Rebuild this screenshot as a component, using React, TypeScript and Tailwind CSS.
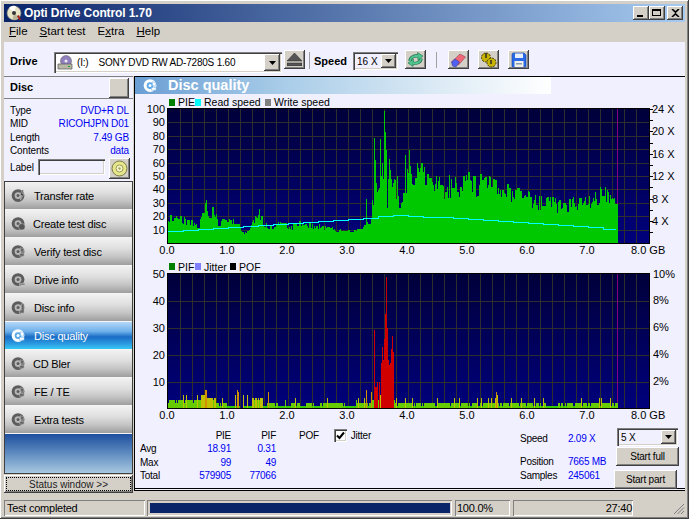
import React from 'react';

const raised = 'shadow-[inset_-1px_-1px_0_#404040,inset_1px_1px_0_#fff,inset_-2px_-2px_0_#808080]';
const sunken = 'shadow-[inset_1px_1px_0_#808080,inset_2px_2px_0_#404040,inset_-1px_-1px_0_#fff,inset_-2px_-2px_0_#d4d0c8]';
const thin = 'shadow-[inset_1px_1px_0_#808080,inset_-1px_-1px_0_#fff]';

function makeRandom(seed: number) {
  let s = seed;
  return () => {
    s = (s * 1664525 + 1013904223) % 4294967296;
    return s / 4294967296;
  };
}

function interp(points: number[][], x: number) {
  for (let i = 1; i < points.length; i++) {
    if (x <= points[i][0]) {
      const [x0, y0] = points[i - 1];
      const [x1, y1] = points[i];
      return y0 + ((y1 - y0) * (x - x0)) / (x1 - x0);
    }
  }
  return points[points.length - 1][1];
}

const pieEnvelope = [
  [0, 19], [0.1, 21], [0.3, 17], [0.5, 14], [0.55, 22], [0.6, 37], [0.64, 30], [0.68, 20], [0.75, 25], [0.85, 14],
  [0.95, 18], [1.1, 17], [1.15, 14], [1.25, 8], [1.35, 10], [1.4, 15], [1.5, 25], [1.58, 15], [1.7, 13], [1.85, 16],
  [2.0, 11], [2.2, 15], [2.5, 13], [2.8, 10], [3.2, 10], [3.3, 15], [3.38, 17], [3.42, 42], [3.6, 48], [3.8, 42],
  [3.9, 55], [4.0, 60], [4.2, 54], [4.5, 44], [5.0, 47], [5.5, 44], [6.0, 35], [6.5, 30], [7.0, 32], [7.3, 42], [7.45, 33], [7.51, 28],
];

const pieSpikes: Record<number, number> = {
  365: 33, 373: 79, 374: 62, 379: 78, 380: 50, 383: 99, 384: 83, 385: 70, 381: 60, 388: 63, 389: 55, 391: 42, 408: 70, 409: 58, 416: 60, 417: 56,
};

function pieBars() {
  const rand = makeRandom(11);
  let d = '';
  let last = 0;
  for (let x = 167; x < 617; x++) {
    const gb = (x - 167) / 60;
    const env = interp(pieEnvelope, gb);
    const wide = gb > 3.4 && gb < 4;
    const right = gb >= 4;
    let v = rand() < 0.25 && last ? last : env * (wide ? 0.55 + 0.6 * rand() : right ? 0.72 + 0.42 * rand() : 0.8 + 0.34 * rand());
    last = v;
    if (pieSpikes[x]) v = pieSpikes[x];
    d += `M${x + 0.5} 243V${Math.round(243.4 - v * 1.34)}`;
  }
  return d;
}

function readLine() {
  const pts = [[167, 231], [370, 217], [390, 215], [408, 216], [467, 219], [527, 223], [587, 227], [614, 231]];
  let d = 'M167 231.5';
  for (let x = 167; x < 615; x += 15) {
    const y = Math.round(interp(pts, x)) + 0.5;
    d += `V${y}H${Math.min(x + 15, 615)}`;
  }
  return d;
}

const pifBase = [
  [0, 0.45, 3], [0.45, 0.55, 3], [0.55, 0.65, 5], [0.65, 0.8, 4], [0.8, 1.0, 2], [1.0, 1.2, 1], [1.2, 1.25, 0], [1.25, 1.4, 1],
  [1.4, 1.58, 4], [1.58, 1.65, 1], [1.65, 1.82, 2], [1.82, 2.05, 1], [2.05, 2.2, 2], [2.2, 2.3, 1], [2.3, 2.43, 2], [2.43, 2.53, 1],
  [2.53, 2.78, 2], [2.78, 2.95, 2], [2.95, 3.15, 1], [3.15, 3.4, 2], [3.4, 3.8, 3], [3.8, 4.4, 2], [4.4, 4.6, 2], [4.6, 5, 2], [5, 5.5, 2],
  [5.5, 6.3, 2], [6.3, 6.5, 1], [6.5, 7.5, 2],
];

const pifSpikes: Record<number, number> = {
  365: 7, 370: 6, 373: 29, 374: 8, 375: 8, 376: 10, 378: 10, 379: 5, 380: 17, 381: 23, 382: 18, 383: 26, 384: 35, 385: 49, 386: 30, 387: 18,
  388: 16, 389: 17, 390: 22, 391: 27, 392: 21, 236: 7, 237: 6, 234: 5, 246: 5, 242: 5, 267: 6, 495: 6, 496: 5, 494: 4,
};

function pifColor(v: number) {
  if (v >= 8) return '#d00000';
  if (v >= 6) return '#d09000';
  if (v >= 4) return '#c0c000';
  if (v >= 2) return '#66cc00';
  return '#33cc00';
}

function pifBars() {
  const rand = makeRandom(29);
  const out: { x: number; y: number; c: string }[] = [];
  for (let x = 167; x < 617; x++) {
    const gb = (x - 167) / 60;
    const seg = pifBase.find((s) => gb >= s[0] && gb < s[1]);
    let v = seg ? seg[2] : 1;
    const r = rand();
    if (r < 0.05) v += 2;
    else if (r < 0.25 && v > 1) v -= 1;
    if (pifSpikes[x]) v = pifSpikes[x];
    out.push({ x, y: Math.round(408.5 - v * 2.69), c: pifColor(v) });
  }
  return out;
}

function Grid({ top, bottom, rows }: { top: number; bottom: number; rows: number[] }) {
  const xs = Array.from({ length: 39 }, (_, i) => 179 + i * 12);
  return (
    <g stroke="#2e2e2e" strokeWidth="1" shapeRendering="crispEdges">
      {xs.map((x) => (
        <line key={x} x1={x + 0.5} x2={x + 0.5} y1={top} y2={bottom} />
      ))}
      {rows.map((y) => (
        <line key={y} x1={167} x2={648} y1={y + 0.5} y2={y + 0.5} />
      ))}
    </g>
  );
}

function XLabels({ y }: { y: number }) {
  return (
    <g fill="#000" fontSize="11">
      {[0, 1, 2, 3, 4, 5, 6, 7].map((n) => (
        <text key={n} x={166 + n * 60} y={y} textAnchor="middle">{n}.0</text>
      ))}
      <text x={630} y={y}>8.0 GB</text>
    </g>
  );
}

function TopChart() {
  const rows = [1, 2, 3, 4, 5, 6, 7, 8, 9].map((k) => Math.round(243 - 13.4 * k));
  return (
    <svg width="551" height="165" viewBox="134 95 551 165" className="block shrink-0">
      <defs>
        <linearGradient id="plotTop" x1="0" x2="0" y1="0" y2="1">
          <stop offset="0" stopColor="#00003a" />
          <stop offset="1" stopColor="#00007c" />
        </linearGradient>
      </defs>
      <rect x="168" y="99" width="6" height="7" fill="#008000" />
      <text x="177" y="106" fontSize="10.5">PIE</text>
      <rect x="194" y="99" width="6" height="7" fill="#00ffff" />
      <text x="203" y="106" fontSize="10.5">Read speed</text>
      <rect x="264" y="99" width="6" height="7" fill="#808080" />
      <text x="273" y="106" fontSize="10.5">Write speed</text>
      <rect x="167" y="109" width="481" height="134" fill="url(#plotTop)" />
      <Grid top={109} bottom={243} rows={rows} />
      <path d="M616.5 109V243" stroke="#800080" shapeRendering="crispEdges" />
      <path d={pieBars()} stroke="#00c800" shapeRendering="crispEdges" />
      <path d={readLine()} stroke="#00ffff" fill="none" shapeRendering="crispEdges" />
      <rect x="166.5" y="108.5" width="482" height="135" fill="none" stroke="#000" shapeRendering="crispEdges" />
      <g fill="#000" fontSize="11" textAnchor="end">
        <text x="164" y="113">100</text>
        {[9, 8, 7, 6, 5, 4, 3, 2, 1].map((k) => (
          <text key={k} x="164" y={Math.round(243 - 13.4 * k) + 4}>{k * 10}</text>
        ))}
      </g>
      <g stroke="#000" shapeRendering="crispEdges">
        {Array.from({ length: 12 }, (_, i) => (
          <line key={i} x1="649" x2="652" y1={Math.round(109 + i * 11.2) + 0.5} y2={Math.round(109 + i * 11.2) + 0.5} />
        ))}
      </g>
      <g fill="#000" fontSize="11">
        {[24, 20, 16, 12, 8, 4].map((s, i) => (
          <text key={s} x="651" y={113 + i * 22.4}>{s} X</text>
        ))}
      </g>
      <XLabels y={254} />
    </svg>
  );
}

function BottomChart() {
  const rows = [382, 355, 328, 301];
  return (
    <svg width="551" height="165" viewBox="134 260 551 165" className="block shrink-0">
      <defs>
        <linearGradient id="plotBottom" x1="0" x2="0" y1="0" y2="1">
          <stop offset="0" stopColor="#00003a" />
          <stop offset="1" stopColor="#00007c" />
        </linearGradient>
      </defs>
      <rect x="168" y="263" width="6" height="7" fill="#008000" />
      <text x="177" y="271" fontSize="10.5">PIF</text>
      <rect x="194" y="263" width="6" height="7" fill="#8080ff" />
      <text x="203" y="271" fontSize="10.5">Jitter</text>
      <rect x="229" y="263" width="6" height="7" fill="#000" />
      <text x="238" y="271" fontSize="10.5">POF</text>
      <rect x="167" y="274" width="481" height="134" fill="url(#plotBottom)" />
      <Grid top={274} bottom={408} rows={rows} />
      <path d="M616.5 274V408" stroke="#800080" shapeRendering="crispEdges" />
      <g shapeRendering="crispEdges">
        {pifBars().map((b) => (
          <line key={b.x} x1={b.x + 0.5} x2={b.x + 0.5} y1={408} y2={b.y} stroke={b.c} />
        ))}
      </g>
      <rect x="166.5" y="273.5" width="482" height="135" fill="none" stroke="#000" shapeRendering="crispEdges" />
      <g fill="#000" fontSize="11" textAnchor="end">
        <text x="164" y="278">50</text>
        <text x="164" y="305">40</text>
        <text x="164" y="332">30</text>
        <text x="164" y="359">20</text>
        <text x="164" y="386">10</text>
      </g>
      <g fill="#000" fontSize="11">
        <text x="652" y="278">10%</text>
        <text x="652" y="304">8%</text>
        <text x="652" y="331">6%</text>
        <text x="652" y="358">4%</text>
        <text x="652" y="385">2%</text>
      </g>
      <XLabels y={419} />
    </svg>
  );
}

function DiscIcon({ light = false, size = 15, mark = 0 }: { light?: boolean; size?: number; mark?: number }) {
  const main = light ? '#ffffff' : '#5c5c5c';
  const ring = light ? '#5aa8e8' : '#b8b8b8';
  return (
    <svg width={size} height={size} viewBox="0 0 16 16" className="shrink-0">
      <circle cx="7.5" cy="8" r="6.8" fill={main} />
      <circle cx="7.5" cy="8" r="3.6" fill={ring} />
      <circle cx="7.5" cy="8" r="1.6" fill={main} />
      {mark === 1 && <path d="M12 2 9.5 8h2l-1.500 5 4-7h-2l1.500-4z" fill={light ? '#fff' : '#444'} stroke="#ddd" strokeWidth=".5" />}
      {mark === 2 && <circle cx="11.500" cy="11.500" r="3.500" fill="#555" stroke="#ccc" strokeWidth=".5" />}
      {mark === 3 && <path d="M9 12h6v2H9z" fill="#777" stroke="#ddd" strokeWidth=".5" />}
      {mark === 4 && <path d="M11 4h3v10h-5v-3h2z" fill="#666" stroke="#ddd" strokeWidth=".5" />}
      {mark === 5 && <path d="m10 4 4 1-1 4-3-1zM9 10h5v3H9z" fill={light ? '#fff' : '#666'} stroke={light ? '#5aa8e8' : '#ccc'} strokeWidth=".5" />}
    </svg>
  );
}

function ToolButton({ className, children }: { className: string; children: React.ReactNode }) {
  return <div className={`${raised} ${className} w-[21px] h-[19px] bg-[#d4d0c8] flex items-center justify-center shrink-0`}>{children}</div>;
}

function ComboArrow({ className }: { className: string }) {
  return (
    <div className={`${raised} ${className} bg-[#d4d0c8] flex items-center justify-center`}>
      <svg width="7" height="4" viewBox="0 0 7 4"><path d="M0 0h7L3.500 4z" fill="#000" /></svg>
    </div>
  );
}

const navItems = [
  { label: 'Transfer rate', mark: 1, pl: 'pl-[29px]' },
  { label: 'Create test disc', mark: 2, pl: 'pl-[28px]' },
  { label: 'Verify test disc', mark: 5, pl: 'pl-[29px]' },
  { label: 'Drive info', mark: 3, pl: 'pl-[29px]' },
  { label: 'Disc info', mark: 4, pl: 'pl-[29px]' },
  { label: 'Disc quality', mark: 5, pl: 'pl-[29px]', active: true },
  { label: 'CD Bler', mark: 5, pl: 'pl-[28px]' },
  { label: 'FE / TE', mark: 5, pl: 'pl-[29px]' },
  { label: 'Extra tests', mark: 5, pl: 'pl-[29px]' },
];

function NavButton({ item }: { item: (typeof navItems)[number] }) {
  const tone = item.active
    ? 'bg-[linear-gradient(#b4d8f8,#6eb0ea_35%,#1a6cc4_55%,#2a9ae0_80%,#38c8f4)] text-white'
    : 'bg-[linear-gradient(#f2f2f2,#dedede_40%,#c4c4c4_70%,#9e9e9e)] text-black';
  return (
    <div className={`${tone} relative h-[28px] flex items-center border-b border-[#f4f4f4] text-[11px]`}>
      <div className="absolute left-[6px] top-[6px]">
        <DiscIcon light={item.active} mark={item.mark} />
      </div>
      <span className={`${item.pl} pt-[2px] tracking-[-0.2px]`}>{item.label}</span>
    </div>
  );
}

function InfoRow({ label, value }: { label: string; value: string }) {
  return (
    <div className="h-[13.5px] flex items-center justify-between pl-[6px] pr-[4px] text-[10px] leading-none tracking-[-0.15px]">
      <span className="text-black">{label}</span>
      <span className="text-[#0000f0]">{value}</span>
    </div>
  );
}

function Sidebar() {
  return (
    <div className="w-[129px] shrink-0 flex flex-col">
      <div className="h-[23px] bg-[#f0f0ff] border-t border-[#808080] border-b flex items-center justify-between">
        <span className="pl-[6px] text-[11px] font-bold">Disc</span>
        <div className={`${raised} w-[20px] h-[20px] bg-[#d4d0c8] mr-[4px]`} />
      </div>
      <div className="h-[82px] bg-[#f0f0ff] pt-[5px] flex flex-col">
        <InfoRow label="Type" value="DVD+R DL" />
        <InfoRow label="MID" value="RICOHJPN D01" />
        <InfoRow label="Length" value="7.49 GB" />
        <InfoRow label="Contents" value="data" />
        <div className="flex items-start pl-[6px]">
          <span className="text-[10px] w-[28px] tracking-[-0.15px] mt-[5px] leading-none">Label</span>
          <div className={`${sunken} w-[67px] h-[16px] mt-[1px] bg-[#f0f0ff]`} />
          <div className={`${raised} w-[21px] h-[21px] ml-[4px] bg-[#d4d0c8] flex items-center justify-center`}>
            <svg width="17" height="17" viewBox="0 0 17 17">
              <circle cx="8.500" cy="8.500" r="7.500" fill="#e6e68a" stroke="#77774a" />
              <circle cx="8.500" cy="8.500" r="3.500" fill="#f8f8c8" stroke="#99995a" />
              <circle cx="8.500" cy="8.500" r="1.200" fill="#a0a060" />
            </svg>
          </div>
        </div>
      </div>
      <div className="border-l border-t border-r border-[#404040] flex flex-col">
        {navItems.map((item) => (
          <NavButton key={item.label} item={item} />
        ))}
        <div className="h-[40px] bg-[linear-gradient(#1f4f9e,#5f8cc0_50%,#a8c8e0)] border-b border-[#404040]" />
      </div>
      <div className={`${raised} mt-[1px] h-[18px] bg-[#d4d0c8] flex items-center justify-center p-[2px]`}>
        <div className="w-full h-full border border-dotted border-black flex items-center justify-center text-[10px] text-[#222]">
          Status window &gt;&gt;
        </div>
      </div>
    </div>
  );
}

function Stats() {
  return (
    <div className="flex-1 relative flex text-[10px] leading-none tracking-[-0.25px]">
      <div className="w-[150px] grid grid-cols-[39px_52px_45px] auto-rows-[13.5px] pl-[5px] pt-[4px] items-center">
        <span />
        <span className="text-right">PIE</span>
        <span className="text-right">PIF</span>
        <span>Avg</span>
        <span className="text-right text-[#0000f0]">18.91</span>
        <span className="text-right text-[#0000f0]">0.31</span>
        <span>Max</span>
        <span className="text-right text-[#0000f0]">99</span>
        <span className="text-right text-[#0000f0]">49</span>
        <span>Total</span>
        <span className="text-right text-[#0000f0]">579905</span>
        <span className="text-right text-[#0000f0]">77066</span>
      </div>
      <span className="ml-[14px] mt-[6px]">POF</span>
      <div className="ml-[15px] mt-[4px] flex items-start">
        <div className={`${sunken} w-[13px] h-[13px] bg-white flex items-center justify-center`}>
          <svg width="9" height="9" viewBox="0 0 9 9"><path d="M1 4.500 3.500 7 8 1.500" fill="none" stroke="#000" strokeWidth="2" /></svg>
        </div>
        <span className="ml-[4px] mt-[2px]">Jitter</span>
      </div>
      <div className="ml-[149px] w-[95px] grid grid-cols-[48px_1fr] pt-[9px] content-start">
        <span className="h-[23px]">Speed</span>
        <span className="h-[23px] text-[#0000f0]">2.09 X</span>
        <span className="h-[14px]">Position</span>
        <span className="h-[14px] text-[#0000f0]">7665 MB</span>
        <span>Samples</span>
        <span className="text-[#0000f0]">245061</span>
      </div>
    </div>
  );
}

function StatsButtons() {
  return (
    <div className="absolute left-[479px] top-[351px] w-[65px] text-[10px] tracking-[-0.2px]">
      <div className={`${sunken} ml-[3px] w-[61px] h-[18px] bg-[#f0f0ff] flex items-center justify-between pl-[4px] pr-[2px]`}>
        <span>5 X</span>
        <ComboArrow className="w-[15px] h-[14px]" />
      </div>
      <div className={`${raised} ml-[2px] mt-[1px] w-[63px] h-[19px] bg-[#d4d0c8] flex items-center justify-center`}>Start full</div>
      <div className={`${raised} mt-[4px] w-[63px] h-[19px] bg-[#d4d0c8] flex items-center justify-center`}>Start part</div>
    </div>
  );
}

export default function App() {
  return (
    <div className="relative w-[689px] h-[519px] overflow-hidden bg-[#d4d0c8] p-[4px] pb-[3px] flex flex-col text-black font-['Liberation_Sans',sans-serif] shadow-[inset_-1px_-1px_0_#404040,inset_1px_1px_0_#fff,inset_-2px_-2px_0_#808080]">
      {/* title bar */}
      <div className="h-[18px] shrink-0 flex items-center bg-[linear-gradient(90deg,#0a246a,#a6caf0)]">
        <svg width="16" height="16" viewBox="0 0 16 16" className="ml-[2px] shrink-0">
          <circle cx="8" cy="8" r="7" fill="#e8e4c8" stroke="#777" strokeWidth=".6" />
          <path d="M8 8 3 2.800A7 7 0 0 1 10 1.300z" fill="#fff" />
          <path d="M8 8l5.500 4.400A7 7 0 0 1 6.500 14.800z" fill="#b8b498" />
          <circle cx="8" cy="8" r="2" fill="#333" />
          <path d="M11 11l2 4h2l-2-5z" fill="#a02020" />
        </svg>
        <span className="ml-[2px] text-white font-bold text-[12px] tracking-[-0.1px] leading-none">Opti Drive Control 1.70</span>
        <div className="ml-auto flex mr-[2px]">
          <div className={`${raised} w-[16px] h-[14px] bg-[#d4d0c8] relative`}>
            <div className="absolute left-[4px] bottom-[3px] w-[6px] h-[2px] bg-black" />
          </div>
          <div className={`${raised} w-[16px] h-[14px] bg-[#d4d0c8] p-[3px] pr-[4px] pb-[4px]`}>
            <div className="w-full h-full border border-black border-t-2" />
          </div>
          <div className={`${raised} w-[16px] h-[14px] ml-[2px] bg-[#d4d0c8] flex items-center justify-center`}>
            <svg width="9" height="8" viewBox="0 0 9 8"><path d="M1 0 4.500 3.200 8 0M1 8l3.500-3.200L8 8" fill="none" stroke="#000" strokeWidth="1.600" /></svg>
          </div>
        </div>
      </div>

      {/* menu */}
      <div className="h-[20px] shrink-0 flex items-center pl-[5px] gap-[12px] text-[11.5px]">
        <span><u>F</u>ile</span>
        <span><u>S</u>tart test</span>
        <span>E<u>x</u>tra</span>
        <span><u>H</u>elp</span>
      </div>

      {/* toolbar */}
      <div className="h-[34px] shrink-0 bg-[#f0f0ff] flex items-start pt-[8px]">
        <span className="ml-[6px] mt-[3px] w-[44px] text-[11px] font-bold">Drive</span>
        <div className={`${sunken} mt-[2px] w-[228px] h-[21px] bg-white flex items-center pl-[3px] pr-[2px] text-[10px] tracking-[-0.2px] shrink-0`}>
          <svg width="16" height="16" viewBox="0 0 16 16" className="shrink-0">
            <circle cx="9" cy="6" r="5.500" fill="#9080c0" stroke="#555" strokeWidth=".5" />
            <circle cx="9" cy="6" r="1.500" fill="#eee" />
            <path d="M1 9h14v5H1z" fill="#b8b8a8" stroke="#555" strokeWidth=".7" />
            <path d="M11 11h2v1h-2z" fill="#20a020" />
          </svg>
          <span className="ml-[4px]">(I:)</span>
          <span className="ml-[10px]">SONY DVD RW AD-7280S 1.60</span>
          <ComboArrow className="ml-auto w-[16px] h-[17px]" />
        </div>
        <ToolButton className="ml-[2px]">
          <svg width="15" height="13" viewBox="0 0 15 13">
            <path d="M7.500 0 15 8H0z" fill="#555" stroke="#222" strokeWidth=".5" />
            <path d="M0 10h15v3H0z" fill="#555" stroke="#222" strokeWidth=".5" />
          </svg>
        </ToolButton>
        <div className="ml-[4px] mt-[2px] w-[1px] h-[17px] bg-[#a0a0a0]" />
        <span className="ml-[4px] mt-[3px] w-[39px] text-[11px] font-bold">Speed</span>
        <div className={`${sunken} mt-[2px] w-[45px] h-[18px] bg-[#f0f0ff] flex items-center justify-between pl-[4px] pr-[2px] text-[10px] shrink-0`}>
          <span>16 X</span>
          <ComboArrow className="w-[15px] h-[14px]" />
        </div>
        <ToolButton className="ml-[7px]">
          <svg width="17" height="15" viewBox="0 0 17 15">
            <path d="M3 9C3 5.500 6.500 3.500 11 4" fill="none" stroke="#1a6a4a" strokeWidth="3.200" />
            <path d="M10.500 0.500 16 4l-5 4.500z" fill="#50c890" stroke="#1a6a4a" strokeWidth=".6" />
            <path d="M3 9C3 5.500 6.500 3.500 11 4" fill="none" stroke="#50c890" strokeWidth="2" />
            <path d="M14 6.500C14 10 10.500 12 6 11" fill="none" stroke="#1a6a4a" strokeWidth="3.200" />
            <path d="M6.500 7 1 11l5 3.500z" fill="#50c890" stroke="#1a6a4a" strokeWidth=".6" />
            <path d="M14 6.500C14 10 10.500 12 6 11" fill="none" stroke="#50c890" strokeWidth="2" />
          </svg>
        </ToolButton>
        <div className="ml-[10px] mt-[2px] w-[1px] h-[16px] bg-[#a0a0a0]" />
        <ToolButton className="ml-[11px]">
          <svg width="17" height="16" viewBox="0 0 17 16">
            <path d="M1.500 10 10 2l5.500 3-7 8z" fill="#f06878" stroke="#803040" strokeWidth=".5" />
            <path d="M1.500 10 5 7l4.500 3-3.500 5-3.500-1z" fill="#5060f0" stroke="#303080" strokeWidth=".5" />
          </svg>
        </ToolButton>
        <ToolButton className="ml-[9px]">
          <svg width="17" height="16" viewBox="0 0 17 16">
            <circle cx="6" cy="5.500" r="4.500" fill="#c8b400" stroke="#403800" strokeWidth="1" strokeDasharray="2 1" />
            <circle cx="11.500" cy="10.500" r="4.500" fill="#c8b400" stroke="#403800" strokeWidth="1" strokeDasharray="2 1" />
            <path d="M6 1v5M11 8v4" stroke="#222" strokeWidth="1.400" />
          </svg>
        </ToolButton>
        <ToolButton className="ml-[9px]">
          <svg width="16" height="16" viewBox="0 0 16 16">
            <path d="M1 2.500Q1 1 2.500 1h10.500L15 3v11q0 1-1 1H2q-1 0-1-1z" fill="#2a6ae8" stroke="#1040a0" strokeWidth=".6" />
            <path d="M4 1.500h8V6H4z" fill="#e8f0ff" />
            <path d="M3.500 9h9v6h-9z" fill="#f0f0e8" />
            <path d="M5 11h6v1.500H5z" fill="#8898b8" />
          </svg>
        </ToolButton>
      </div>

      {/* body */}
      <div className="flex-1 min-h-0 flex">
        <Sidebar />
        <div className="w-px shrink-0 bg-[#d4d0c8]" />
        <div className="flex-1 min-w-0 h-[415px] flex flex-col bg-[#f0f0ff] border-t border-l border-[#000] border-b-[3px] [border-bottom-style:double] relative">
          <div className="h-[17px] shrink-0 w-[416px] flex items-center bg-[linear-gradient(90deg,#6a9ed4,#a8cce8_35%,#d8e8f4_70%,#ffffff)]">
            <div className="ml-[8px]"><DiscIcon light mark={5} size={15} /></div>
            <span className="ml-[10px] text-white font-bold text-[14.5px] leading-none">Disc quality</span>
          </div>
          <div className="h-[1px] shrink-0" />
          <TopChart />
          <BottomChart />
          <Stats />
          <StatsButtons />
        </div>
      </div>

      {/* status bar */}
      <div className="h-[18px] shrink-0 flex items-start text-[11px] tracking-[-0.25px] pt-[2px]">
        <div className={`${thin} w-[141px] h-[16px] flex items-center pl-[3px] shrink-0`}>Test completed</div>
        <div className={`${thin} ml-[2px] w-[305px] h-[16px] p-[3px] pr-[2px] shrink-0`}>
          <div className="w-full h-full bg-[#0a246a]" />
        </div>
        <div className={`${thin} ml-[3px] w-[55px] h-[16px] flex items-center pl-[2px] shrink-0`}>100.0%</div>
        <div className={`${thin} ml-[3px] w-[120px] h-[16px] flex items-center justify-end pr-[1px] shrink-0`}>27:40</div>
        <svg width="12" height="12" viewBox="0 0 12 12" className="ml-auto mt-[3px]">
          <path d="M11 1 1 11M11 4.500 4.500 11M11 8 8 11" stroke="#808080" fill="none" />
        </svg>
      </div>
    </div>
  );
}
